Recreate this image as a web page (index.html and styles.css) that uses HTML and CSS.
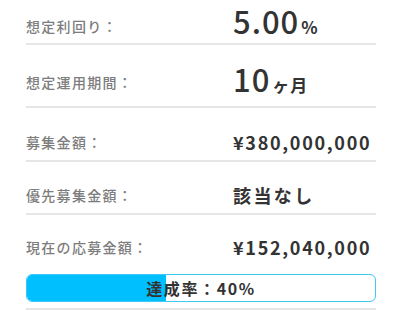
FILE: index.html
```html
<!DOCTYPE html>
<html lang="ja">
<head>
    <meta charset="UTF-8">
    <title>募集概要</title>
    <link rel="stylesheet" href="styles.css">
</head>
<body>
<div class="fund-info">
    <div class="info-row row-rate">
        <div class="info-label">想定利回り：</div>
        <div class="info-value big">5.00<span class="unit">%</span></div>
    </div>
    <div class="info-row row-term">
        <div class="info-label">想定運用期間：</div>
        <div class="info-value big">10<span class="unit">ヶ月</span></div>
    </div>
    <div class="info-row row-amount">
        <div class="info-label">募集金額：</div>
        <div class="info-value">¥380,000,000</div>
    </div>
    <div class="info-row row-priority">
        <div class="info-label">優先募集金額：</div>
        <div class="info-value wide">該当なし</div>
    </div>
    <div class="info-row row-current">
        <div class="info-label">現在の応募金額：</div>
        <div class="info-value">¥152,040,000</div>
    </div>
    <div class="progress-wrap">
        <div class="progress-bar">
            <div class="progress-fill" style="width: 40%"></div>
            <div class="progress-text">達成率：40%</div>
        </div>
    </div>
</div>
</body>
</html>
```

FILE: styles.css
```css
*{
    box-sizing: border-box;
}
body{
    margin: 0;
    background: #ffffff;
    font-family: "Noto Sans CJK JP", "Noto Sans", sans-serif;
}
.fund-info{
    width: 350px;
    margin-left: 26px;
}
.info-row{
    display: flex;
    align-items: center;
    border-bottom: 2px solid #e6e6e6;
}
.row-rate{
    height: 45px;
}
.row-rate .info-label{
    margin-top: 8px;
}
.row-term{
    height: 63px;
}
.row-term .info-label{
    margin-top: 12px;
}
.row-term .info-value{
    margin-top: 8px;
}
.row-amount{
    height: 54px;
    padding-top: 16px;
}
.row-priority{
    height: 53px;
    padding-top: 14px;
}
.row-current{
    height: 58px;
    padding-top: 6px;
    border-bottom: none;
}
.info-label{
    width: 207px;
    font-size: 14px;
    font-weight: 500;
    color: #7d7d7d;
    letter-spacing: 1.3px;
}
.info-value{
    font-size: 18px;
    font-weight: bold;
    color: #333333;
    letter-spacing: 1.7px;
}
.info-value.wide{
    letter-spacing: 2.4px;
}
.info-value.big{
    font-size: 31px;
    font-weight: 500;
    letter-spacing: 1px;
    line-height: 1.3;
}
.info-value.big .unit{
    font-size: 17px;
    font-weight: bold;
    letter-spacing: 1px;
    margin-left: 2px;
}
.progress-wrap{
    padding: 1px 0 6px 0;
    border-bottom: 2px solid #e6e6e6;
}
.progress-bar{
    height: 28px;
    border: 1px solid #3cc9f3;
    border-radius: 6px;
    position: relative;
    overflow: hidden;
}
.progress-fill{
    height: 100%;
    background: #00bfff;
}
.progress-text{
    position: absolute;
    top: 0;
    left: 0;
    right: 0;
    line-height: 26px;
    text-align: center;
    font-size: 16px;
    font-weight: bold;
    color: #333333;
    letter-spacing: 1.6px;
}
```
